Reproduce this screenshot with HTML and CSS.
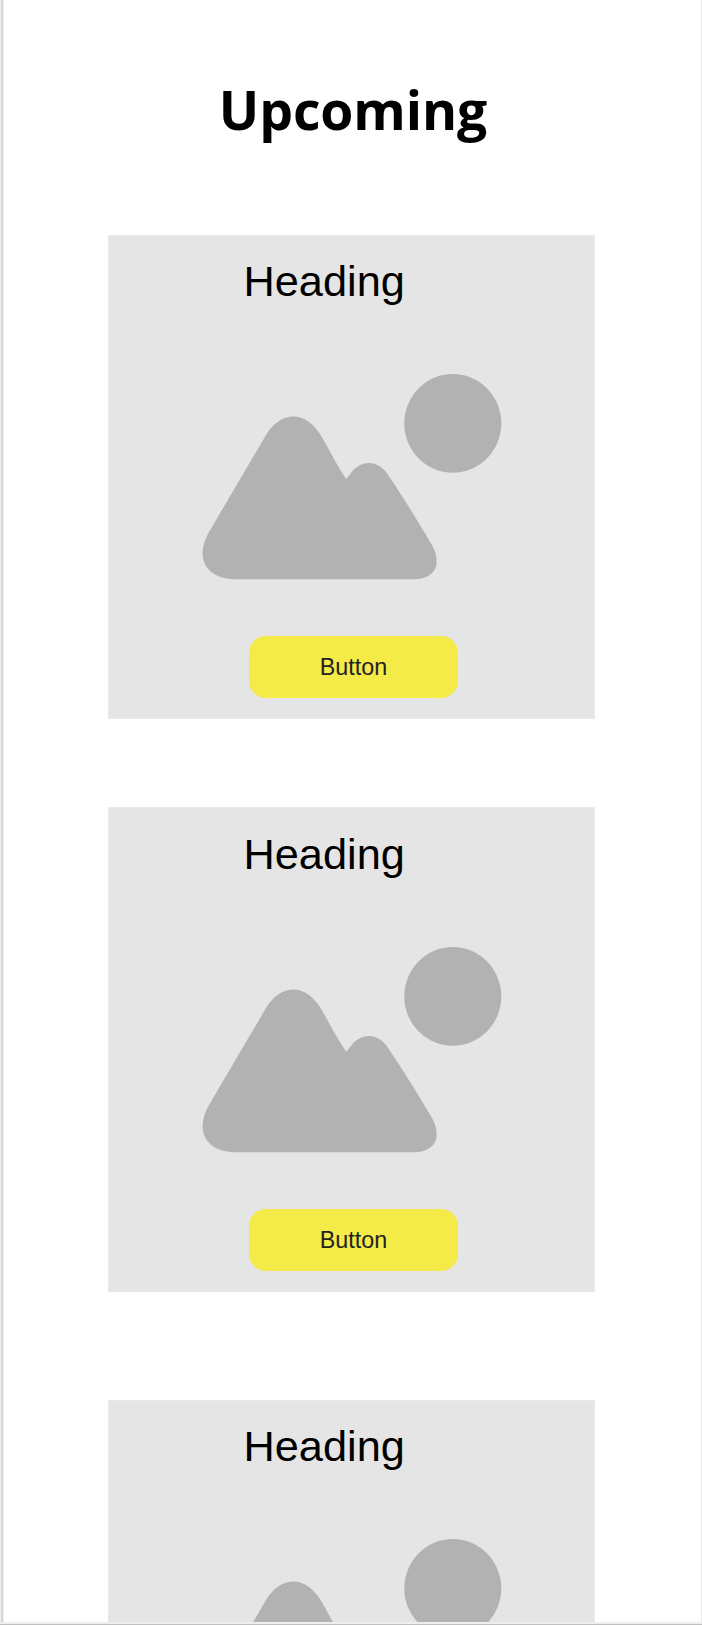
FILE: index.html
```html
<!DOCTYPE html>
<html lang="en">
<head>
<meta charset="utf-8">
<title>Upcoming</title>
<link rel="stylesheet" href="styles.css">
</head>
<body>
<main class="page">
  <h1 class="title">Upcoming</h1>
  <section class="card">
    <h2 class="heading">Heading</h2>
    <svg class="picture" viewBox="0 0 300 199"><path class="shape" d="M64 61C79 36.500 104 36 119.500 62.500C128 77 133 88 144.300 105L150.500 97C160 86.500 174 86 184 98C193 111 202 125 208.500 135.500C216 148 223 159 229 169.500C233 176 234.600 181 234.600 188C234.600 199 225 205.300 211 205.300H35C13 205.300 0.600 195 0.600 179C0.600 172 3 165 7 158Z"/><ellipse class="shape" cx="250.800" cy="49.400" rx="48.500" ry="49.300"/></svg>
    <button class="button">Button</button>
  </section>
  <section class="card">
    <h2 class="heading">Heading</h2>
    <svg class="picture" viewBox="0 0 300 199"><path class="shape" d="M64 61C79 36.500 104 36 119.500 62.500C128 77 133 88 144.300 105L150.500 97C160 86.500 174 86 184 98C193 111 202 125 208.500 135.500C216 148 223 159 229 169.500C233 176 234.600 181 234.600 188C234.600 199 225 205.300 211 205.300H35C13 205.300 0.600 195 0.600 179C0.600 172 3 165 7 158Z"/><ellipse class="shape" cx="250.800" cy="49.400" rx="48.500" ry="49.300"/></svg>
    <button class="button">Button</button>
  </section>
  <section class="card card-last">
    <h2 class="heading">Heading</h2>
    <svg class="picture" viewBox="0 0 300 199"><path class="shape" d="M64 61C79 36.500 104 36 119.500 62.500C128 77 133 88 144.300 105L150.500 97C160 86.500 174 86 184 98C193 111 202 125 208.500 135.500C216 148 223 159 229 169.500C233 176 234.600 181 234.600 188C234.600 199 225 205.300 211 205.300H35C13 205.300 0.600 195 0.600 179C0.600 172 3 165 7 158Z"/><ellipse class="shape" cx="250.800" cy="49.400" rx="48.500" ry="49.300"/></svg>
  </section>
</main>
<div class="bottom-edge"></div>
</body>
</html>
```
FILE: styles.css
```css
* { box-sizing: border-box; }
body {
  margin: 0;
  height: 1625px;
  overflow: hidden;
  background: #fff;
  font-family: "Liberation Sans", Arial, sans-serif;
}
.page {
  height: 1622px;
  overflow: hidden;
  padding-left: 108px;
  background: linear-gradient(to right, #eee 1px, #d8d8d8 1px 3px, #f0f0f0 3px 4px, #fff 4px);
  border-right: 1px solid #ebebeb;
}
.title {
  width: 490px;
  height: 235px;
  margin: 0;
  padding-top: 70px;
  text-align: center;
  font: 700 53.500px/80px "Open Sans", sans-serif;
  letter-spacing: -0.1px;
  color: #000;
}
.card {
  display: flex;
  flex-direction: column;
  width: 487px;
  height: 484px;
  margin-bottom: 88px;
  background: #e5e5e5;
  border: 1px solid #e9e9e9;
}
.card + .card {
  height: 485px;
  margin-bottom: 108px;
  padding-top: 1px;
}
.card + .card-last { padding-top: 0; }
.heading {
  margin: 20px 0 0 134.500px;
  height: 50px;
  font-size: 43.3px;
  font-weight: 400;
  line-height: 50px;
  color: #000;
}
.picture {
  flex: none;
  width: 300px;
  height: 199px;
  margin: 68px 0 0 93px;
  overflow: visible;
}
.shape { fill: #b2b2b2; }
.button {
  flex: none;
  width: 209px;
  height: 62px;
  margin: 63px 0 0 140px;
  padding: 0;
  border: 0;
  border-radius: 17px;
  background: #f4ea48;
  color: #222;
  font: 23.300px/62px "Liberation Sans", Arial, sans-serif;
}
.bottom-edge {
  height: 3px;
  background: #eee;
  border-bottom: 1px solid #c0c0c0;
}
```
